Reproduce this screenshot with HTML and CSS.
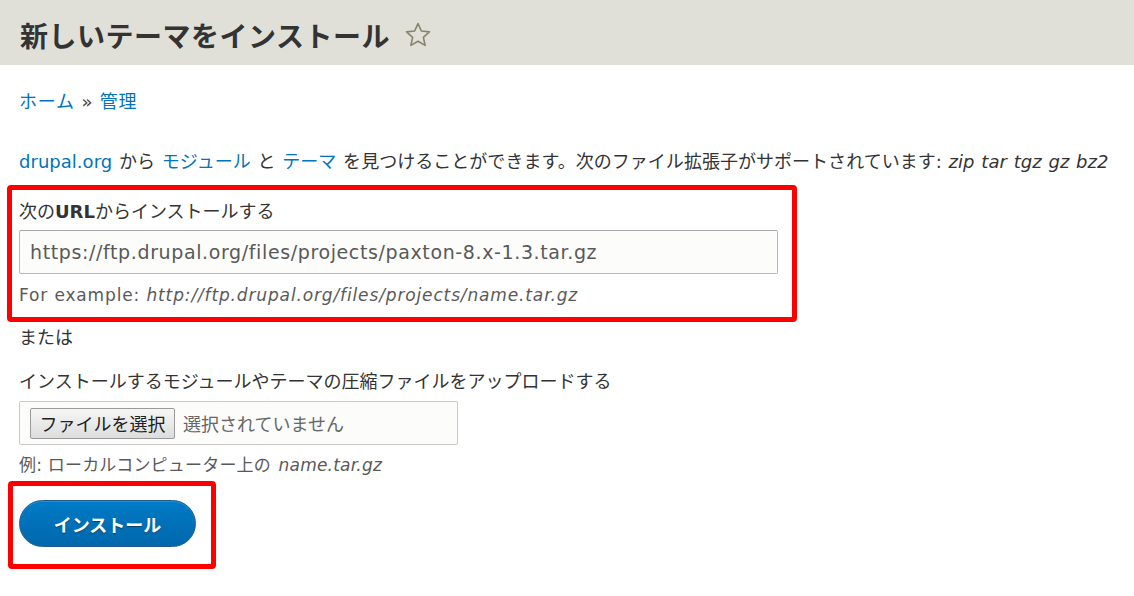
FILE: index.html
```html
<!DOCTYPE html>
<html lang="ja">
<head>
<meta charset="utf-8">
<title>新しいテーマをインストール</title>
<link rel="stylesheet" href="styles.css">
</head>
<body>
<header class="page-header">
  <h1 class="page-title">新しいテーマをインストール</h1>
  <svg class="star" width="28" height="28" viewBox="0 0 24 24" aria-hidden="true">
    <polygon points="12,2.2 14.9,8.6 21.8,9.3 16.6,14 18.1,20.9 12,17.4 5.9,20.9 7.4,14 2.2,9.3 9.1,8.6" fill="none" stroke="#85856d" stroke-width="1.4" stroke-linejoin="round"/>
  </svg>
</header>
<main class="content">
  <nav class="breadcrumb"><a href="#">ホーム</a> <span class="sep">»</span> <a href="#">管理</a></nav>
  <p class="intro"><a href="#">drupal.org</a> から <a href="#">モジュール</a> と <a href="#">テーマ</a> を見つけることができます。次のファイル拡張子がサポートされています: <em>zip tar tgz gz bz2</em></p>

  <div class="highlight highlight-url">
    <label class="field-label">次の<b>URL</b>からインストールする</label>
    <div class="text-input">https://ftp.drupal.org/files/projects/paxton-8.x-1.3.tar.gz</div>
    <div class="description">For example: <em>http://ftp.drupal.org/files/projects/name.tar.gz</em></div>
  </div>

  <div class="or">または</div>

  <label class="field-label upload-label">インストールするモジュールやテーマの圧縮ファイルをアップロードする</label>
  <div class="file-input">
    <span class="file-button">ファイルを選択</span>
    <span class="file-status">選択されていません</span>
  </div>
  <div class="description desc-file">例: ローカルコンピューター上の <em>name.tar.gz</em></div>

  <div class="highlight highlight-button">
    <button class="install-button" type="button">インストール</button>
  </div>
</main>
</body>
</html>
```

FILE: styles.css
```css
html, body {
  margin: 0;
  padding: 0;
  background: #ffffff;
}
body {
  font-family: "DejaVu Sans", "Noto Sans CJK JP", sans-serif;
  font-size: 18px;
  color: #333333;
}
a {
  color: #0074bd;
  text-decoration: none;
}
.page-header {
  height: 65px;
  background: #e0e0d8;
  display: flex;
  align-items: center;
  padding: 4px 20px 0;
  box-sizing: border-box;
}
.page-title {
  margin: 0;
  font-family: "Noto Sans CJK JP", sans-serif;
  font-size: 28px;
  font-weight: 700;
  line-height: 36px;
  letter-spacing: 0.5px;
  color: #333333;
}
.star {
  margin-left: 14px;
}
.content {
  padding: 0 19px;
}
.breadcrumb {
  margin-top: 25px;
  line-height: 24px;
  letter-spacing: 0.8px;
}
.breadcrumb .sep {
  color: #444;
}
.intro {
  margin: 36px 0 0;
  line-height: 24px;
  white-space: nowrap;
  word-spacing: 1px;
  letter-spacing: 0.03px;
}
.highlight {
  border: 5px solid #ff0000;
  border-radius: 4px;
}
.highlight-url {
  margin: 11px 0 0 -12px;
  width: 759px;
  padding: 10px 14px 11px 7px;
}
.field-label {
  display: block;
  line-height: 24px;
}
.field-label b {
  font-weight: 700;
}
.text-input {
  margin-top: 6px;
  height: 44px;
  box-sizing: border-box;
  border: 1px solid #b8b8b8;
  border-top-color: #a8a8a8;
  border-radius: 2px;
  background: #fcfcfa;
  padding: 0 10px;
  line-height: 42px;
  color: #595959;
  font-size: 19px;
  letter-spacing: 0.62px;
  white-space: nowrap;
}
.description {
  margin-top: 10px;
  font-size: 17px;
  line-height: 22px;
  letter-spacing: 0.86px;
  color: #595959;
  white-space: nowrap;
}
.or {
  margin-top: 4px;
  line-height: 24px;
}
.upload-label {
  margin-top: 20px;
}
.file-input {
  margin-top: 7px;
  width: 439px;
  height: 44px;
  box-sizing: border-box;
  border: 1px solid #c8c8c8;
  border-radius: 2px;
  background: #fcfcfa;
  display: flex;
  align-items: center;
  padding-left: 10px;
}
.file-button {
  width: 145px;
  height: 31px;
  box-sizing: border-box;
  border: 1px solid #9a9a9a;
  border-radius: 2px;
  background: linear-gradient(#f6f6f6, #dddddd);
  font-family: "Noto Sans CJK JP", sans-serif;
  font-size: 18px;
  line-height: 29px;
  text-align: center;
  color: #222;
}
.file-status {
  margin-left: 8px;
  font-family: "Noto Sans CJK JP", sans-serif;
  font-size: 18px;
  color: #666;
}
.desc-file {
  margin-top: 9px;
  letter-spacing: 0.2px;
}
.desc-file em {
  margin-left: 2px;
}
.highlight-button {
  margin: 5px 0 0 -11px;
  width: fit-content;
  padding: 14px 15px 17px 6px;
}
.install-button {
  display: block;
  width: 177px;
  height: 47px;
  border: 1px solid #1e5c90;
  border-radius: 24px;
  background: linear-gradient(#007bc6, #0067ac);
  box-shadow: inset 0 1px 0 rgba(255,255,255,0.15);
  color: #ffffff;
  font-family: "Noto Sans CJK JP", sans-serif;
  font-size: 18px;
  font-weight: 700;
  text-shadow: 0 1px 1px #0d3f66;
  padding: 0;
  cursor: pointer;
}
```
